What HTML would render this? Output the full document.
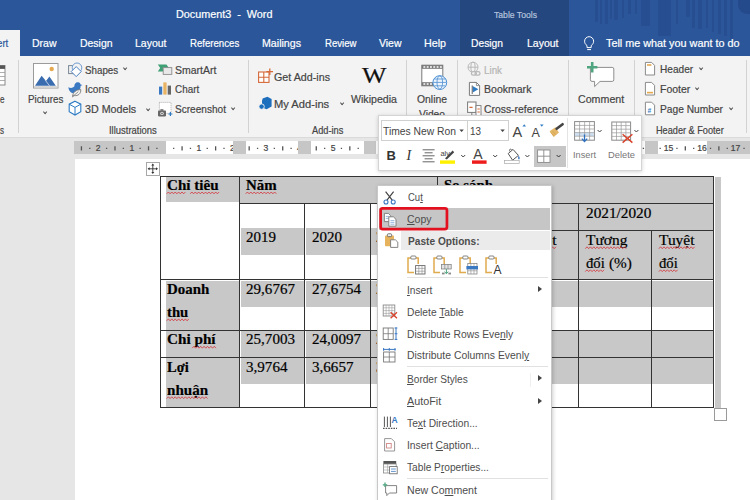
<!DOCTYPE html>
<html lang="vi"><head><meta charset="utf-8"><title>Document3 - Word</title>
<style>
html,body{margin:0;padding:0}
body{width:750px;height:500px;position:relative;overflow:hidden;background:#e6e6e6;font-family:"Liberation Sans",sans-serif}
.a{position:absolute}
.t{position:absolute;white-space:pre;transform-origin:0 0;-webkit-text-stroke:0.2px currentColor}
.t u{text-decoration:underline;text-underline-offset:1px;text-decoration-thickness:1px}
.ns{-webkit-text-stroke:0 !important}
.hl{position:absolute;background:#c8c8c8}
.vl{position:absolute;width:1px;background:#333}
.hz{position:absolute;height:1px;background:#333}
.sep{position:absolute;width:1px;background:#d2d2d2;top:60px;height:73px}
.chev{position:absolute;width:2.4px;height:2.4px;border-right:1px solid #555;border-bottom:1px solid #555;transform:translate(.4px,.6px) rotate(45deg)}
.msep{position:absolute;height:1px;background:#e1e1e1;left:407px;width:141px}
.arr{position:absolute;width:0;height:0;border-left:4px solid #444;border-top:3.5px solid transparent;border-bottom:3.5px solid transparent}
svg{position:absolute;overflow:visible}
</style></head><body>
<!-- title + tabs -->
<div class="a" id="blue" style="left:0;top:0;width:750px;height:56px;background:#2b579a"></div>
<div class="a" style="left:460px;top:0;width:109px;height:56px;background:#24477f"></div>
<div class="a" style="left:595.0px;top:0;width:3.0px;height:21.6px;background:rgba(22,48,110,.22)"></div>
<div class="a" style="left:600.0px;top:0;width:2.4px;height:24.0px;background:rgba(22,48,110,.22)"></div>
<div class="a" style="left:604.8px;top:0;width:3.6px;height:24.0px;background:rgba(22,48,110,.22)"></div>
<div class="a" style="left:609.6px;top:0;width:2.4px;height:19.0px;background:rgba(22,48,110,.22)"></div>
<div class="a" style="left:614.0px;top:0;width:4.0px;height:20.0px;background:rgba(22,48,110,.22)"></div>
<div class="a" style="left:621.6px;top:0;width:2.4px;height:18.0px;background:rgba(22,48,110,.22)"></div>
<div class="a" style="left:627.5px;top:0;width:3.5px;height:14.4px;background:rgba(22,48,110,.22)"></div>
<div class="a" style="left:634.7px;top:0;width:2.3px;height:14.0px;background:rgba(22,48,110,.22)"></div>
<div class="a" style="left:641.0px;top:0;width:9.3px;height:26.0px;background:rgba(22,48,110,.22)"></div>
<div class="a" style="left:657.5px;top:0;width:13.2px;height:36.0px;background:rgba(22,48,110,.22)"></div>
<div class="a" style="left:675.5px;top:0;width:2.5px;height:24.0px;background:rgba(22,48,110,.22)"></div>
<div class="a" style="left:686.0px;top:0;width:4.0px;height:17.0px;background:rgba(22,48,110,.22)"></div>
<div class="a" style="left:692.0px;top:0;width:2.7px;height:28.0px;background:rgba(22,48,110,.22)"></div>
<div class="a" style="left:698.0px;top:0;width:4.0px;height:28.8px;background:rgba(22,48,110,.22)"></div>
<div class="a" style="left:705.5px;top:0;width:2.5px;height:28.0px;background:rgba(22,48,110,.22)"></div>
<div class="a" style="left:711.5px;top:0;width:2.5px;height:32.0px;background:rgba(22,48,110,.22)"></div>
<div class="a" style="left:717.5px;top:0;width:3.5px;height:33.6px;background:rgba(22,48,110,.22)"></div>
<div class="a" style="left:723.5px;top:0;width:3.5px;height:36.0px;background:rgba(22,48,110,.22)"></div>
<div class="a" style="left:729.5px;top:0;width:3.5px;height:40.0px;background:rgba(22,48,110,.22)"></div>
<div class="a" style="left:738px;top:0;width:12px;height:14px;border-radius:0 0 0 9px;background:rgba(22,48,110,.3)"></div>
<div class="a" style="left:0;top:30px;width:20px;height:26px;background:#f3f3f3"></div>
<!-- ribbon -->
<div class="a" style="left:0;top:56px;width:750px;height:81px;background:#f3f3f3"></div>
<div class="a" style="left:0;top:137px;width:750px;height:1px;background:#dadada"></div>
<div class="sep" style="left:18px"></div><div class="sep" style="left:248px"></div><div class="sep" style="left:406px"></div><div class="sep" style="left:457px"></div><div class="sep" style="left:568px"></div><div class="sep" style="left:634px"></div><div class="sep" style="left:746px"></div>
<svg style="left:0;top:0" width="750" height="160" viewBox="0 0 750 160" fill="none">
<!-- lightbulb -->
<g stroke="#fff" stroke-width="1" fill="none"><path d="M587 45.6C585.2 44.2 584.6 42.8 584.6 41.2A4.5 4.5 0 0 1 593.6 41.2C593.6 42.8 593 44.2 591.2 45.6V47.6H587Z"/><path d="M587.2 49.6H591"/></g>
<!-- table fragment -->
<rect x="-8" y="65.5" width="13" height="19.5" fill="#fff" stroke="#8a8a8a" stroke-width="1"/>
<rect x="-8" y="65.5" width="13" height="3.4" fill="#555"/>
<path d="M-8 72.5H5M-8 76.5H5M-8 80.5H5" stroke="#9a9a9a" stroke-width="0.8"/>
<!-- pictures -->
<rect x="33.5" y="63.5" width="24.5" height="24.5" fill="#fff" stroke="#9b9b9b" stroke-width="1"/>
<rect x="34" y="86" width="23.5" height="1.6" fill="#d6d6d6"/>
<path d="M35 85.8L41.6 75.8L46 81L49.4 76.6L55.8 85.8Z" fill="#3a6db0"/>
<path d="M45.4 80.4L49.6 85.8" stroke="#f0f4fa" stroke-width="0.7"/>
<circle cx="51.7" cy="69" r="2.2" fill="#e5a94f"/>
<!-- shapes -->
<rect x="68.6" y="65.6" width="8" height="8" stroke="#7b8796" stroke-width="1" fill="#f3f3f3"/>
<circle cx="77" cy="67.8" r="4.8" stroke="#6f9bd1" stroke-width="1" fill="#f3f3f3"/>
<path d="M76.2 66.6L81.2 71.6L76.2 76.6L71.2 71.6Z" stroke="#4b7fc0" stroke-width="1" fill="#fff"/>
<!-- icons (bird + leaf) -->
<path d="M68.3 87.2C70.5 88.4 72.6 88.2 74.3 86.6C74.3 83.6 76 81.8 78.2 82.2C79.6 82.4 80.4 83.4 80.6 84.4L82.4 85L80.6 85.9C80.6 90.8 77 93.6 72.8 93.2C70.4 92.8 68.8 90.4 68.3 87.2Z" fill="#3b78c2"/>
<path d="M72.6 96.2C73 92.4 76 89.6 80.8 89.6C81 93.8 78 96 74.4 95.6Z" fill="#f3f3f3" stroke="#777" stroke-width="0.9"/>
<path d="M72 97.2L78.4 91.6" stroke="#777" stroke-width="0.8"/>
<!-- 3D models -->
<path d="M75 101.2L80.8 104.2V111.6L75 115L69.2 111.6V104.2Z" stroke="#2e7bc4" stroke-width="1.1" fill="#fff"/>
<path d="M69.2 104.2L75 107.4L80.8 104.2M75 107.4V115" stroke="#2e7bc4" stroke-width="1"/>
<!-- smartart -->
<path d="M157.8 64.4H166.4L169 68H163.2V71.6H157.8L160.2 68Z" fill="#3f9f75"/>
<rect x="163.2" y="67.6" width="8.6" height="6.8" fill="#e8e8e8" stroke="#8c8c8c" stroke-width="0.9"/>
<!-- chart -->
<rect x="159" y="86.6" width="3.2" height="8" fill="#3b78c2"/>
<rect x="163.3" y="82.4" width="3.3" height="12.2" fill="#e8b463"/>
<rect x="167.7" y="85.6" width="3.3" height="9" fill="#666"/>
<!-- screenshot -->
<rect x="159.4" y="102.4" width="11.6" height="11" stroke="#9a9a9a" stroke-width="0.8" stroke-dasharray="1 1" fill="#fff"/>
<rect x="158" y="110.4" width="8" height="6" rx="0.8" fill="#666"/><rect x="160.4" y="109.2" width="3" height="1.6" fill="#666"/><circle cx="162" cy="113.4" r="1.7" fill="#f3f3f3"/><circle cx="162" cy="113.4" r="0.9" fill="#666"/>
<path d="M170.4 112V116M168.4 114H172.4" stroke="#2e7bc4" stroke-width="1.2"/>
<!-- get add-ins -->
<g stroke="#d56a3b" stroke-width="1.1" fill="#fff"><rect x="258.6" y="72" width="10.4" height="10.4"/><path d="M263.8 72V82.4M258.6 77.2H269" fill="none"/><path d="M269.8 68.4V75M266.4 71.7H273" fill="none" stroke-width="1.3"/></g>
<!-- my add-ins -->
<path d="M262.6 98.6L267.4 96.8L271.6 99V106.4L266.6 109.2L262 107.4V101Z" fill="#1d6fbd"/>
<circle cx="261.6" cy="106.6" r="2.7" fill="#1d6fbd" stroke="#f3f3f3" stroke-width="0.9"/>
<!-- online video -->
<rect x="421.8" y="65.2" width="21" height="20.6" fill="#fff" stroke="#7a7a7a" stroke-width="1"/>
<rect x="421.8" y="65.2" width="21" height="3.6" fill="#777"/><rect x="421.8" y="82.2" width="21" height="3.6" fill="#777"/>
<path d="M423.4 67H442" stroke="#fff" stroke-width="1.7" stroke-dasharray="1.9 1.4"/>
<path d="M423.4 84H434" stroke="#fff" stroke-width="1.7" stroke-dasharray="1.9 1.4"/>
<circle cx="439.8" cy="82.6" r="6.9" fill="#eef4fb" stroke="#4b8fd3" stroke-width="1"/>
<ellipse cx="439.8" cy="82.4" rx="2.8" ry="6.6" stroke="#4b8fd3" stroke-width="0.8"/>
<path d="M433.2 82.4H446.4M434.2 79H445.4M434.2 85.8H445.4" stroke="#4b8fd3" stroke-width="0.8"/>
<!-- link (disabled) -->
<g stroke="#b9b9b9" stroke-width="1" fill="none"><circle cx="473" cy="67.2" r="5"/><ellipse cx="473" cy="67.2" rx="2.1" ry="5"/><path d="M468 67.2H478"/><rect x="471.4" y="71.6" width="5" height="3.6" rx="1.8" fill="#f3f3f3" stroke-width="1.3"/><rect x="475" y="71.6" width="5" height="3.6" rx="1.8" stroke-width="1.3"/></g>
<!-- bookmark -->
<path d="M469.4 82.4H476.4L479.6 85.6V95.4H469.4Z" fill="#fff" stroke="#7a7a7a" stroke-width="1"/>
<path d="M476.4 82.4V85.6H479.6" stroke="#7a7a7a" stroke-width="0.8"/>
<path d="M472.6 86V92.6L478.4 89.3Z" fill="#2e7bc4"/>
<path d="M472.2 85.4V94" stroke="#555" stroke-width="0.9"/>
<!-- cross-reference -->
<rect x="467.6" y="102" width="8.4" height="10.4" fill="#fff" stroke="#7a7a7a" stroke-width="1"/>
<path d="M469.4 107.4H472.6" stroke="#d56a3b" stroke-width="1.3"/>
<rect x="476" y="105.6" width="5" height="10" fill="#fff" stroke="#7a7a7a" stroke-width="0.9"/>
<path d="M477.4 109H479.8M477.4 112H479.8" stroke="#d56a3b" stroke-width="1.1"/>
<path d="M471.8 112.4V115.4H476" stroke="#7a7a7a" stroke-width="0.9"/>
<!-- comment -->
<path d="M590.4 67.4H612.2Q613.8 67.4 613.8 69V79.8Q613.8 81.4 612.2 81.4H600L594.6 86.6V81.4H592Q590.4 81.4 590.4 79.8Z" fill="#fff" stroke="#8d8d8d" stroke-width="1"/>
<path d="M592.2 62V72.4M587 67.2H597.4" stroke="#4ea57f" stroke-width="2.6"/>
<!-- header/footer/page number -->
<g fill="#fff" stroke="#8a8a8a" stroke-width="1"><path d="M645.4 62.4H651.6L654.6 65.4V75H645.4Z"/><path d="M645.4 82.4H651.6L654.6 85.4V95H645.4Z"/><path d="M645.4 102.2H651.6L654.6 105.2V114.8H645.4Z"/></g>
<path d="M647 65H651.4" stroke="#e5a94f" stroke-width="1.6"/>
<path d="M647 92.6H653" stroke="#e5a94f" stroke-width="1.6"/>
<text x="647.6" y="112.6" font-family="Liberation Sans, sans-serif" font-size="6.5" font-weight="bold" fill="#2e7bc4" font-style="italic">#</text>
</svg>
<div class="chev" style="left:43px;top:109.5px"></div>
<div class="chev" style="left:122.5px;top:66px"></div>
<div class="chev" style="left:145.5px;top:106.5px"></div>
<div class="chev" style="left:230.8px;top:105.6px"></div>
<div class="chev" style="left:339.8px;top:101px"></div>
<div class="chev" style="left:698.5px;top:65.6px"></div>
<div class="chev" style="left:695.2px;top:85.6px"></div>
<div class="chev" style="left:728.8px;top:105.6px"></div>

<span class="t" style="left:175.6px;top:9.4px;font:normal 11.00px/1 'Liberation Sans', sans-serif;color:#fff;transform:scaleX(0.9813)">Document3  -  Word</span>
<span class="t" style="left:493.5px;top:9.8px;font:normal 9.50px/1 'Liberation Sans', sans-serif;color:#b4c3de;transform:scaleX(0.9080)">Table Tools</span>
<span class="t" style="left:-2.8px;top:38.2px;font:normal 11.00px/1 'Liberation Sans', sans-serif;color:#2b579a;transform:scaleX(0.8798)">ert</span>
<span class="t" style="left:32.0px;top:38.2px;font:normal 11.00px/1 'Liberation Sans', sans-serif;color:#fff;transform:scaleX(0.9544)">Draw</span>
<span class="t" style="left:80.0px;top:38.2px;font:normal 11.00px/1 'Liberation Sans', sans-serif;color:#fff;transform:scaleX(0.9489)">Design</span>
<span class="t" style="left:135.0px;top:38.2px;font:normal 11.00px/1 'Liberation Sans', sans-serif;color:#fff;transform:scaleX(0.9536)">Layout</span>
<span class="t" style="left:189.6px;top:38.2px;font:normal 11.00px/1 'Liberation Sans', sans-serif;color:#fff;transform:scaleX(0.8744)">References</span>
<span class="t" style="left:262.0px;top:38.2px;font:normal 11.00px/1 'Liberation Sans', sans-serif;color:#fff;transform:scaleX(0.9663)">Mailings</span>
<span class="t" style="left:325.0px;top:38.2px;font:normal 11.00px/1 'Liberation Sans', sans-serif;color:#fff;transform:scaleX(0.8731)">Review</span>
<span class="t" style="left:379.0px;top:38.2px;font:normal 11.00px/1 'Liberation Sans', sans-serif;color:#fff;transform:scaleX(0.9511)">View</span>
<span class="t" style="left:424.0px;top:38.2px;font:normal 11.00px/1 'Liberation Sans', sans-serif;color:#fff;transform:scaleX(0.9724)">Help</span>
<span class="t" style="left:471.0px;top:38.2px;font:normal 11.00px/1 'Liberation Sans', sans-serif;color:#fff;transform:scaleX(0.9343)">Design</span>
<span class="t" style="left:527.0px;top:38.2px;font:normal 11.00px/1 'Liberation Sans', sans-serif;color:#fff;transform:scaleX(0.9536)">Layout</span>
<span class="t" style="left:606.0px;top:38.2px;font:normal 11.00px/1 'Liberation Sans', sans-serif;color:#fff;transform:scaleX(0.9834)">Tell me what you want to do</span>
<span class="t" style="left:0.0px;top:93.6px;font:normal 11.40px/1 'Liberation Sans', sans-serif;color:#444;transform:scaleX(0.7094)">e</span>
<span class="t" style="left:0.0px;top:124.6px;font:normal 11.40px/1 'Liberation Sans', sans-serif;color:#444;transform:scaleX(0.7014)">s</span>
<span class="t" style="left:27.6px;top:93.8px;font:normal 11.40px/1 'Liberation Sans', sans-serif;color:#444;transform:scaleX(0.8601)">Pictures</span>
<span class="t" style="left:84.8px;top:64.6px;font:normal 11.40px/1 'Liberation Sans', sans-serif;color:#444;transform:scaleX(0.8592)">Shapes</span>
<span class="t" style="left:84.8px;top:84.2px;font:normal 11.40px/1 'Liberation Sans', sans-serif;color:#444;transform:scaleX(0.8886)">Icons</span>
<span class="t" style="left:84.8px;top:104.2px;font:normal 11.40px/1 'Liberation Sans', sans-serif;color:#444;transform:scaleX(0.9403)">3D Models</span>
<span class="t" style="left:109.0px;top:125.4px;font:normal 10.50px/1 'Liberation Sans', sans-serif;color:#444;transform:scaleX(0.8981)">Illustrations</span>
<span class="t" style="left:175.0px;top:64.6px;font:normal 11.40px/1 'Liberation Sans', sans-serif;color:#444;transform:scaleX(0.9213)">SmartArt</span>
<span class="t" style="left:175.0px;top:84.2px;font:normal 11.40px/1 'Liberation Sans', sans-serif;color:#444;transform:scaleX(0.8686)">Chart</span>
<span class="t" style="left:175.0px;top:104.2px;font:normal 11.40px/1 'Liberation Sans', sans-serif;color:#444;transform:scaleX(0.8850)">Screenshot</span>
<span class="t" style="left:274.4px;top:71.6px;font:normal 11.40px/1 'Liberation Sans', sans-serif;color:#444;transform:scaleX(0.9407)">Get Add-ins</span>
<span class="t" style="left:274.4px;top:98.6px;font:normal 11.40px/1 'Liberation Sans', sans-serif;color:#444;transform:scaleX(0.9797)">My Add-ins</span>
<span class="t" style="left:351.0px;top:93.6px;font:normal 11.40px/1 'Liberation Sans', sans-serif;color:#444;transform:scaleX(0.9314)">Wikipedia</span>
<span class="t" style="left:311.6px;top:125.4px;font:normal 10.50px/1 'Liberation Sans', sans-serif;color:#444;transform:scaleX(0.8818)">Add-ins</span>
<span class="t" style="left:417.0px;top:93.6px;font:normal 11.40px/1 'Liberation Sans', sans-serif;color:#444;transform:scaleX(0.9108)">Online</span>
<span class="t" style="left:419.0px;top:108.6px;font:normal 11.40px/1 'Liberation Sans', sans-serif;color:#444;transform:scaleX(0.8985)">Video</span>
<span class="t" style="left:483.6px;top:64.9px;font:normal 10.50px/1 'Liberation Sans', sans-serif;color:#b5b5b5;transform:scaleX(0.9343)">Link</span>
<span class="t" style="left:483.6px;top:84.2px;font:normal 11.40px/1 'Liberation Sans', sans-serif;color:#444;transform:scaleX(0.9243)">Bookmark</span>
<span class="t" style="left:483.6px;top:104.2px;font:normal 11.40px/1 'Liberation Sans', sans-serif;color:#444;transform:scaleX(0.9110)">Cross-reference</span>
<span class="t" style="left:577.8px;top:93.6px;font:normal 11.40px/1 'Liberation Sans', sans-serif;color:#444;transform:scaleX(0.9357)">Comment</span>
<span class="t" style="left:660.4px;top:64.4px;font:normal 11.40px/1 'Liberation Sans', sans-serif;color:#444;transform:scaleX(0.8860)">Header</span>
<span class="t" style="left:660.4px;top:84.0px;font:normal 11.40px/1 'Liberation Sans', sans-serif;color:#444;transform:scaleX(0.9204)">Footer</span>
<span class="t" style="left:660.4px;top:104.0px;font:normal 11.40px/1 'Liberation Sans', sans-serif;color:#444;transform:scaleX(0.8964)">Page Number</span>
<span class="t" style="left:655.7px;top:125.4px;font:normal 10.50px/1 'Liberation Sans', sans-serif;color:#444;transform:scaleX(0.8721)">Header &amp; Footer</span>
<span class="t" style="left:362.0px;top:64.0px;font:normal 23.00px/1 'Liberation Serif', serif;color:#111;transform:scaleX(1.1235)">W</span>
<!-- ruler -->
<div class="a" style="left:74px;top:141px;width:676px;height:13px;background:#fff"></div>
<div class="a" style="left:74px;top:141px;width:91.5px;height:13px;background:#c6c6c6"></div>
<div class="a" style="left:707px;top:141px;width:43px;height:13px;background:#c6c6c6"></div>
<span class="t" style="left:88.2px;top:143px;width:20px;text-align:center;font:8.6px/10px 'Liberation Sans',sans-serif;color:#444">2</span>
<span class="t" style="left:121.8px;top:143px;width:20px;text-align:center;font:8.6px/10px 'Liberation Sans',sans-serif;color:#444">1</span>
<span class="t" style="left:188.9px;top:143px;width:20px;text-align:center;font:8.6px/10px 'Liberation Sans',sans-serif;color:#444">1</span>
<span class="t" style="left:222.4px;top:143px;width:20px;text-align:center;font:8.6px/10px 'Liberation Sans',sans-serif;color:#444">2</span>
<span class="t" style="left:255.9px;top:143px;width:20px;text-align:center;font:8.6px/10px 'Liberation Sans',sans-serif;color:#444">3</span>
<span class="t" style="left:289.5px;top:143px;width:20px;text-align:center;font:8.6px/10px 'Liberation Sans',sans-serif;color:#444">4</span>
<span class="t" style="left:323.1px;top:143px;width:20px;text-align:center;font:8.6px/10px 'Liberation Sans',sans-serif;color:#444">5</span>
<span class="t" style="left:356.6px;top:143px;width:20px;text-align:center;font:8.6px/10px 'Liberation Sans',sans-serif;color:#444">6</span>
<span class="t" style="left:390.1px;top:143px;width:20px;text-align:center;font:8.6px/10px 'Liberation Sans',sans-serif;color:#444">7</span>
<span class="t" style="left:423.7px;top:143px;width:20px;text-align:center;font:8.6px/10px 'Liberation Sans',sans-serif;color:#444">8</span>
<span class="t" style="left:457.2px;top:143px;width:20px;text-align:center;font:8.6px/10px 'Liberation Sans',sans-serif;color:#444">9</span>
<span class="t" style="left:490.8px;top:143px;width:20px;text-align:center;font:8.6px/10px 'Liberation Sans',sans-serif;color:#444">10</span>
<span class="t" style="left:524.3px;top:143px;width:20px;text-align:center;font:8.6px/10px 'Liberation Sans',sans-serif;color:#444">11</span>
<span class="t" style="left:557.9px;top:143px;width:20px;text-align:center;font:8.6px/10px 'Liberation Sans',sans-serif;color:#444">12</span>
<span class="t" style="left:591.5px;top:143px;width:20px;text-align:center;font:8.6px/10px 'Liberation Sans',sans-serif;color:#444">13</span>
<span class="t" style="left:625.0px;top:143px;width:20px;text-align:center;font:8.6px/10px 'Liberation Sans',sans-serif;color:#444">14</span>
<span class="t" style="left:658.5px;top:143px;width:20px;text-align:center;font:8.6px/10px 'Liberation Sans',sans-serif;color:#444">15</span>
<span class="t" style="left:692.1px;top:143px;width:20px;text-align:center;font:8.6px/10px 'Liberation Sans',sans-serif;color:#444">16</span>
<span class="t" style="left:725.6px;top:143px;width:20px;text-align:center;font:8.6px/10px 'Liberation Sans',sans-serif;color:#444">17</span>
<svg style="left:0;top:0" width="750" height="160" viewBox="0 0 750 160"><path d="M81.43 146.15V150.45M89.81 147.65V148.95M106.59 147.65V148.95M114.98 146.15V150.45M123.36 147.65V148.95M140.14 147.65V148.95M148.53 146.15V150.45M156.91 147.65V148.95M173.69 147.65V148.95M182.08 146.15V150.45M190.46 147.65V148.95M207.24 147.65V148.95M215.63 146.15V150.45M224.01 147.65V148.95M240.79 147.65V148.95M249.18 146.15V150.45M257.56 147.65V148.95M274.34 147.65V148.95M282.72 146.15V150.45M291.11 147.65V148.95M307.89 147.65V148.95M316.27 146.15V150.45M324.66 147.65V148.95M341.44 147.65V148.95M349.82 146.15V150.45M358.21 147.65V148.95M374.99 147.65V148.95M383.38 146.15V150.45M391.76 147.65V148.95M408.54 147.65V148.95M416.92 146.15V150.45M425.31 147.65V148.95M442.09 147.65V148.95M450.47 146.15V150.45M458.86 147.65V148.95M475.64 147.65V148.95M484.02 146.15V150.45M492.41 147.65V148.95M509.19 147.65V148.95M517.58 146.15V150.45M525.96 147.65V148.95M542.74 147.65V148.95M551.12 146.15V150.45M559.51 147.65V148.95M576.29 147.65V148.95M584.67 146.15V150.45M593.06 147.65V148.95M609.84 147.65V148.95M618.23 146.15V150.45M626.61 147.65V148.95M643.39 147.65V148.95M651.77 146.15V150.45M660.16 147.65V148.95M676.94 147.65V148.95M685.32 146.15V150.45M693.71 147.65V148.95M710.49 147.65V148.95M718.87 146.15V150.45M727.26 147.65V148.95M744.04 147.65V148.95" stroke="#555" stroke-width="1.3" fill="none"/></svg>
<div class="a" style="left:233.0px;top:141px;width:12.5px;height:13px;background:#c6c6c6"></div>
<div class="a" style="left:298.3px;top:141px;width:12.5px;height:13px;background:#c6c6c6"></div>
<div class="a" style="left:363.6px;top:141px;width:12.5px;height:13px;background:#c6c6c6"></div>
<div class="a" style="left:430.6px;top:141px;width:12.5px;height:13px;background:#c6c6c6"></div>
<div class="a" style="left:498.6px;top:141px;width:12.5px;height:13px;background:#c6c6c6"></div>
<div class="a" style="left:572.2px;top:141px;width:12.5px;height:13px;background:#c6c6c6"></div>
<div class="a" style="left:645.3px;top:141px;width:12.5px;height:13px;background:#c6c6c6"></div>
<!-- page -->
<div class="a" style="left:74.5px;top:158.6px;width:676px;height:342px;background:#fff"></div>
<div class="hl" style="left:166.4px;top:177.0px;width:73.0px;height:25.4px"></div>
<div class="hl" style="left:166.4px;top:280.5px;width:73.0px;height:49.5px"></div>
<div class="hl" style="left:166.4px;top:331.0px;width:73.0px;height:26.0px"></div>
<div class="hl" style="left:166.4px;top:358.0px;width:73.0px;height:49.5px"></div>
<div class="hl" style="left:240.4px;top:177.0px;width:196.6px;height:25.6px"></div>
<div class="hl" style="left:438.0px;top:177.0px;width:275.6px;height:26.0px"></div>
<div class="hl" style="left:240.6px;top:228.4px;width:63.8px;height:26.6px"></div>
<div class="hl" style="left:240.6px;top:280.5px;width:63.8px;height:26.0px"></div>
<div class="hl" style="left:240.6px;top:331.0px;width:63.8px;height:26.0px"></div>
<div class="hl" style="left:240.6px;top:358.0px;width:63.8px;height:26.0px"></div>
<div class="hl" style="left:305.9px;top:228.4px;width:63.8px;height:26.6px"></div>
<div class="hl" style="left:305.9px;top:280.5px;width:63.8px;height:26.0px"></div>
<div class="hl" style="left:305.9px;top:331.0px;width:63.8px;height:26.0px"></div>
<div class="hl" style="left:305.9px;top:358.0px;width:63.8px;height:26.0px"></div>
<div class="hl" style="left:371.2px;top:228.4px;width:65.5px;height:26.6px"></div>
<div class="hl" style="left:371.2px;top:280.5px;width:65.5px;height:26.0px"></div>
<div class="hl" style="left:371.2px;top:331.0px;width:65.5px;height:26.0px"></div>
<div class="hl" style="left:371.2px;top:358.0px;width:65.5px;height:26.0px"></div>
<div class="hl" style="left:438.0px;top:204.0px;width:275.6px;height:75.5px"></div>
<div class="hl" style="left:438.0px;top:280.5px;width:275.6px;height:26.1px"></div>
<div class="hl" style="left:438.0px;top:331.0px;width:275.6px;height:26.0px"></div>
<div class="hl" style="left:438.0px;top:358.0px;width:275.6px;height:26.0px"></div>
<div class="hl" style="left:714.6px;top:177.0px;width:6.2px;height:230.5px"></div>
<span class="t" style="left:167.0px;top:177.7px;font:bold 14.70px/1 'Liberation Serif', serif;color:#000;transform:scaleX(1.0281)">Chỉ tiêu</span>
<span class="t" style="left:246.0px;top:177.7px;font:bold 14.70px/1 'Liberation Serif', serif;color:#000;transform:scaleX(1.0137)">Năm</span>
<span class="t" style="left:444.0px;top:177.7px;font:bold 14.70px/1 'Liberation Serif', serif;color:#000;transform:scaleX(1.0084)">So sánh</span>
<span class="t" style="left:246.0px;top:230.1px;font:normal 14.70px/1 'Liberation Serif', serif;color:#000;transform:scaleX(1.0213)">2019</span>
<span class="t" style="left:311.5px;top:230.1px;font:normal 14.70px/1 'Liberation Serif', serif;color:#000;transform:scaleX(1.0213)">2020</span>
<span class="t" style="left:375.5px;top:230.1px;font:normal 14.70px/1 'Liberation Serif', serif;color:#000;transform:scaleX(1.0213)">2021</span>
<span class="t" style="left:585.6px;top:205.7px;font:normal 14.70px/1 'Liberation Serif', serif;color:#000;transform:scaleX(1.0407)">2021/2020</span>
<span class="t" style="left:444.0px;top:205.7px;font:normal 14.70px/1 'Liberation Serif', serif;color:#000;transform:scaleX(1.0343)">2020/2019</span>
<span class="t" style="left:585.6px;top:232.5px;font:normal 14.70px/1 'Liberation Serif', serif;color:#000;transform:scaleX(1.0510)">Tương</span>
<span class="t" style="left:585.6px;top:255.5px;font:normal 14.70px/1 'Liberation Serif', serif;color:#000;transform:scaleX(1.0010)">đối</span>
<span class="t" style="left:609.0px;top:255.5px;font:normal 14.70px/1 'Liberation Serif', serif;color:#000;transform:scaleX(1.0394)">(%)</span>
<span class="t" style="left:659.2px;top:232.5px;font:normal 14.70px/1 'Liberation Serif', serif;color:#000;transform:scaleX(1.0519)">Tuyệt</span>
<span class="t" style="left:659.2px;top:255.5px;font:normal 14.70px/1 'Liberation Serif', serif;color:#000;transform:scaleX(1.0010)">đối</span>
<span class="t" style="left:444.0px;top:232.5px;font:normal 14.70px/1 'Liberation Serif', serif;color:#000;transform:scaleX(1.0409)">Tương</span>
<span class="t" style="left:444.0px;top:255.5px;font:normal 14.70px/1 'Liberation Serif', serif;color:#000;transform:scaleX(1.0010)">đối</span>
<span class="t" style="left:467.4px;top:255.5px;font:normal 14.70px/1 'Liberation Serif', serif;color:#000;transform:scaleX(1.0394)">(%)</span>
<span class="t" style="left:520.5px;top:232.5px;font:normal 14.70px/1 'Liberation Serif', serif;color:#000;transform:scaleX(1.0519)">Tuyệt</span>
<span class="t" style="left:520.5px;top:255.5px;font:normal 14.70px/1 'Liberation Serif', serif;color:#000;transform:scaleX(1.0010)">đối</span>
<span class="t" style="left:167.0px;top:282.4px;font:bold 14.70px/1 'Liberation Serif', serif;color:#000;transform:scaleX(1.0158)">Doanh</span>
<span class="t" style="left:167.0px;top:304.7px;font:bold 14.70px/1 'Liberation Serif', serif;color:#000;transform:scaleX(1.0031)">thu</span>
<span class="t" style="left:166.8px;top:332.1px;font:bold 14.70px/1 'Liberation Serif', serif;color:#000;transform:scaleX(1.0351)">Chi phí</span>
<span class="t" style="left:167.0px;top:359.7px;font:bold 14.70px/1 'Liberation Serif', serif;color:#000;transform:scaleX(0.9902)">Lợi</span>
<span class="t" style="left:167.0px;top:382.5px;font:bold 14.70px/1 'Liberation Serif', serif;color:#000;transform:scaleX(1.0292)">nhuận</span>
<span class="t" style="left:246.0px;top:282.4px;font:normal 14.70px/1 'Liberation Serif', serif;color:#000;transform:scaleX(1.0265)">29,6767</span>
<span class="t" style="left:311.5px;top:282.4px;font:normal 14.70px/1 'Liberation Serif', serif;color:#000;transform:scaleX(1.0265)">27,6754</span>
<span class="t" style="left:375.5px;top:282.4px;font:normal 14.70px/1 'Liberation Serif', serif;color:#000;transform:scaleX(1.0381)">28,1123</span>
<span class="t" style="left:246.0px;top:332.1px;font:normal 14.70px/1 'Liberation Serif', serif;color:#000;transform:scaleX(1.0265)">25,7003</span>
<span class="t" style="left:311.5px;top:332.1px;font:normal 14.70px/1 'Liberation Serif', serif;color:#000;transform:scaleX(1.0265)">24,0097</span>
<span class="t" style="left:375.5px;top:332.1px;font:normal 14.70px/1 'Liberation Serif', serif;color:#000;transform:scaleX(1.0265)">24,5560</span>
<span class="t" style="left:246.0px;top:359.7px;font:normal 14.70px/1 'Liberation Serif', serif;color:#000;transform:scaleX(1.0275)">3,9764</span>
<span class="t" style="left:311.5px;top:359.7px;font:normal 14.70px/1 'Liberation Serif', serif;color:#000;transform:scaleX(1.0275)">3,6657</span>
<span class="t" style="left:375.5px;top:359.7px;font:normal 14.70px/1 'Liberation Serif', serif;color:#000;transform:scaleX(1.0275)">3,5563</span>
<svg style="left:0;top:0" width="750" height="500" viewBox="0 0 750 500" fill="none">
<path d="M166.7 193.8L168.4 192.0L170.1 193.8L171.8 192.0L173.5 193.8L175.2 192.0L176.9 193.8L178.6 192.0L180.3 193.8L182.0 192.0L183.7 193.8L185.4 192.0" stroke="#d6262c" stroke-width="0.75" stroke-linejoin="round"/>
<path d="M190.2 193.8L191.9 192.0L193.6 193.8L195.3 192.0L197.0 193.8L198.7 192.0L200.4 193.8L202.1 192.0L203.8 193.8L205.5 192.0L207.2 193.8L208.9 192.0L210.6 193.8L212.3 192.0L214.0 193.8L215.7 192.0L217.4 193.8L219.1 192.0" stroke="#d6262c" stroke-width="0.75" stroke-linejoin="round"/>
<path d="M245.7 193.8L247.4 192.0L249.1 193.8L250.8 192.0L252.5 193.8L254.2 192.0L255.9 193.8L257.6 192.0L259.3 193.8L261.0 192.0L262.7 193.8L264.4 192.0L266.1 193.8L267.8 192.0L269.5 193.8L271.2 192.0L272.9 193.8L274.6 192.0L276.3 193.8" stroke="#d6262c" stroke-width="0.75" stroke-linejoin="round"/>
<path d="M585.3 248.7L587.0 246.8L588.7 248.7L590.4 246.8L592.1 248.7L593.8 246.8L595.5 248.7L597.2 246.8L598.9 248.7L600.6 246.8L602.3 248.7L604.0 246.8L605.7 248.7L607.4 246.8L609.1 248.7L610.8 246.8L612.5 248.7L614.2 246.8L615.9 248.7L617.6 246.8L619.3 248.7L621.0 246.8L622.7 248.7L624.4 246.8L626.1 248.7" stroke="#d6262c" stroke-width="0.75" stroke-linejoin="round"/>
<path d="M585.3 271.6L587.0 269.8L588.7 271.6L590.4 269.8L592.1 271.6L593.8 269.8L595.5 271.6L597.2 269.8L598.9 271.6L600.6 269.8L602.3 271.6L604.0 269.8" stroke="#d6262c" stroke-width="0.75" stroke-linejoin="round"/>
<path d="M658.9 248.7L660.6 246.8L662.3 248.7L664.0 246.8L665.7 248.7L667.4 246.8L669.1 248.7L670.8 246.8L672.5 248.7L674.2 246.8L675.9 248.7L677.6 246.8L679.3 248.7L681.0 246.8L682.7 248.7L684.4 246.8L686.1 248.7L687.8 246.8L689.5 248.7L691.2 246.8L692.9 248.7L694.6 246.8" stroke="#d6262c" stroke-width="0.75" stroke-linejoin="round"/>
<path d="M658.9 271.6L660.6 269.8L662.3 271.6L664.0 269.8L665.7 271.6L667.4 269.8L669.1 271.6L670.8 269.8L672.5 271.6L674.2 269.8L675.9 271.6L677.6 269.8" stroke="#d6262c" stroke-width="0.75" stroke-linejoin="round"/>
<path d="M443.7 248.7L445.4 246.8L447.1 248.7L448.8 246.8L450.5 248.7L452.2 246.8L453.9 248.7L455.6 246.8L457.3 248.7L459.0 246.8L460.7 248.7L462.4 246.8L464.1 248.7L465.8 246.8L467.5 248.7L469.2 246.8L470.9 248.7L472.6 246.8L474.3 248.7L476.0 246.8L477.7 248.7L479.4 246.8L481.1 248.7L482.8 246.8L484.5 248.7" stroke="#d6262c" stroke-width="0.75" stroke-linejoin="round"/>
<path d="M443.7 271.6L445.4 269.8L447.1 271.6L448.8 269.8L450.5 271.6L452.2 269.8L453.9 271.6L455.6 269.8L457.3 271.6L459.0 269.8L460.7 271.6L462.4 269.8" stroke="#d6262c" stroke-width="0.75" stroke-linejoin="round"/>
<path d="M520.2 248.7L521.9 246.8L523.6 248.7L525.3 246.8L527.0 248.7L528.7 246.8L530.4 248.7L532.1 246.8L533.8 248.7L535.5 246.8L537.2 248.7L538.9 246.8L540.6 248.7L542.3 246.8L544.0 248.7L545.7 246.8L547.4 248.7L549.1 246.8L550.8 248.7L552.5 246.8L554.2 248.7L555.9 246.8" stroke="#d6262c" stroke-width="0.75" stroke-linejoin="round"/>
<path d="M520.2 271.6L521.9 269.8L523.6 271.6L525.3 269.8L527.0 271.6L528.7 269.8L530.4 271.6L532.1 269.8L533.8 271.6L535.5 269.8L537.2 271.6L538.9 269.8" stroke="#d6262c" stroke-width="0.75" stroke-linejoin="round"/>
<path d="M166.7 320.8L168.4 318.9L170.1 320.8L171.8 318.9L173.5 320.8L175.2 318.9L176.9 320.8L178.6 318.9L180.3 320.8L182.0 318.9L183.7 320.8L185.4 318.9L187.1 320.8L188.8 318.9" stroke="#d6262c" stroke-width="0.75" stroke-linejoin="round"/>
<path d="M192.2 348.2L193.9 346.3L195.6 348.2L197.3 346.3L199.0 348.2L200.7 346.3L202.4 348.2L204.1 346.3L205.8 348.2L207.5 346.3L209.2 348.2L210.9 346.3L212.6 348.2L214.3 346.3L216.0 348.2" stroke="#d6262c" stroke-width="0.75" stroke-linejoin="round"/>
<path d="M166.7 398.6L168.4 396.8L170.1 398.6L171.8 396.8L173.5 398.6L175.2 396.8L176.9 398.6L178.6 396.8L180.3 398.6L182.0 396.8L183.7 398.6L185.4 396.8L187.1 398.6L188.8 396.8L190.5 398.6L192.2 396.8L193.9 398.6L195.6 396.8L197.3 398.6L199.0 396.8L200.7 398.6L202.4 396.8L204.1 398.6L205.8 396.8L207.5 398.6" stroke="#d6262c" stroke-width="0.75" stroke-linejoin="round"/>
</svg>
<div class="vl" style="left:159.5px;top:176.0px;height:231.5px"></div>
<div class="vl" style="left:713.1px;top:176.0px;height:231.5px"></div>
<div class="vl" style="left:238.9px;top:176.0px;height:231.5px"></div>
<div class="vl" style="left:304.2px;top:203.0px;height:204.5px"></div>
<div class="vl" style="left:369.5px;top:203.0px;height:204.5px"></div>
<div class="vl" style="left:436.5px;top:176.0px;height:231.5px"></div>
<div class="vl" style="left:504.5px;top:230.0px;height:177.5px"></div>
<div class="vl" style="left:578.1px;top:203.0px;height:204.5px"></div>
<div class="vl" style="left:651.2px;top:230.0px;height:177.5px"></div>
<div class="hz" style="top:175.5px;left:159.5px;width:554.6px"></div>
<div class="hz" style="top:407.0px;left:159.5px;width:554.6px"></div>
<div class="hz" style="top:202.5px;left:239.4px;width:474.2px"></div>
<div class="hz" style="top:229.5px;left:437.0px;width:276.6px"></div>
<div class="hz" style="top:279.0px;left:160.0px;width:553.6px"></div>
<div class="hz" style="top:329.5px;left:160.0px;width:553.6px"></div>
<div class="hz" style="top:356.5px;left:160.0px;width:553.6px"></div>
<div class="a" style="left:146px;top:162px;width:13.6px;height:13.6px;background:#fff;border:1px solid #a8a8a8;box-sizing:border-box"></div>
<svg style="left:146px;top:162px" width="13.6" height="13.6" viewBox="0 0 13.6 13.6"><path d="M6.8 2.6V11M2.6 6.8H11" stroke="#333" stroke-width="0.9" fill="none"/><path d="M6.8 1.6L5.3 3.6H8.3ZM6.8 12L5.3 10H8.3ZM1.6 6.8L3.6 5.3V8.3ZM12 6.8L10 5.3V8.3Z" fill="#333"/></svg>
<div class="a" style="left:714px;top:408px;width:13px;height:13px;background:#fff;border:1px solid #9a9a9a;box-sizing:border-box"></div>
<!-- mini toolbar -->
<div class="a" style="left:378px;top:115px;width:264px;height:56px;background:#fff;border:1px solid #d4d4d4;box-sizing:border-box;box-shadow:0 1px 4px rgba(0,0,0,.18)"></div>
<div class="a" style="left:381px;top:120px;width:128px;height:21px;border:1px solid #d0d0d0;box-sizing:border-box;background:#fff"></div>
<div class="a" style="left:467px;top:120px;width:1px;height:21px;background:#d0d0d0"></div>
<div class="a" style="left:534px;top:146px;width:32px;height:21px;background:#c6c6c6"></div>
<div class="a" style="left:567px;top:118px;width:1px;height:50px;background:#e4e4e4"></div>
<svg style="left:0;top:0" width="750" height="180" viewBox="0 0 750 180" fill="none">
<!-- dropdown arrows -->
<path d="M459.4 129.4H463.8L461.6 132Z" fill="#444"/><path d="M500.4 129.4H504.8L502.6 132Z" fill="#444"/>
<!-- A grow / shrink -->
<text x="512.4" y="137" font-family="Liberation Sans, sans-serif" font-size="14.5" fill="#444">A</text>
<path d="M522.4 126.6L524.2 124.2L526 126.6Z" fill="#2e7bc4"/>
<text x="531.6" y="137" font-family="Liberation Sans, sans-serif" font-size="12.5" fill="#444">A</text>
<path d="M540 124.4L541.8 126.8L543.6 124.4Z" fill="#2e7bc4"/>
<!-- format painter -->
<path d="M549.6 131.2L555.4 127.2L559 132.6L553.6 137Z" fill="#e4b868"/>
<path d="M550.6 132.4L554.4 136.2M552.4 130.8L556 134.8" stroke="#c99a45" stroke-width="0.6"/>
<path d="M556.6 128.8L562.6 124.2" stroke="#444" stroke-width="2.6" stroke-linecap="round"/>
<!-- B I -->
<text x="386.6" y="160.4" font-family="Liberation Sans, sans-serif" font-size="13" font-weight="bold" fill="#333">B</text>
<text x="406.6" y="160.4" font-family="Liberation Serif, serif" font-size="14" font-style="italic" fill="#333">I</text>
<!-- align -->
<path d="M422.6 149.8H434.6M424.6 152.8H432.6M422.6 155.8H434.6M424.6 158.8H432.6M422.6 161.8H434.6" stroke="#666" stroke-width="1"/>
<!-- highlight -->
<text x="440.4" y="155.6" font-family="Liberation Sans, sans-serif" font-size="7.5" fill="#444">aly</text>
<path d="M445 158.6L452.6 150.6L454.2 152.2L446.8 159.6Z" fill="#444"/>
<rect x="440" y="160.4" width="15" height="3.4" fill="#fff200"/>
<path d="M461.2 155L463.2 157L465.2 155" stroke="#444" stroke-width="1"/>
<!-- font color -->
<text x="473.2" y="159.4" font-family="Liberation Sans, sans-serif" font-size="14" fill="#444">A</text>
<rect x="472" y="160.4" width="14.6" height="3.4" fill="#ee1c1c"/>
<path d="M493.2 155L495.2 157L497.2 155" stroke="#444" stroke-width="1"/>
<!-- paint bucket -->
<path d="M508.2 153.6L513 149.4L518.4 155.4L512.6 160.2Z" fill="#fff" stroke="#555" stroke-width="1"/>
<path d="M510 151.6C508.6 149.6 510.4 148.2 511.8 150" stroke="#555" stroke-width="0.9"/>
<path d="M518.6 155.6C519.8 157.4 520.2 158.6 519.2 159.4C518.2 159.8 517.6 158.4 518.6 155.6Z" fill="#3b78c2"/>
<rect x="504.6" y="160.6" width="14.6" height="3" fill="#fff" stroke="#aaa" stroke-width="0.7"/>
<path d="M525.4 155L527.4 157L529.4 155" stroke="#444" stroke-width="1"/>
<!-- borders -->
<rect x="537.6" y="150" width="12.4" height="12.4" fill="#fff" stroke="#8a8a8a" stroke-width="0.9"/>
<path d="M543.8 150V162.4M537.6 156.2H550" stroke="#8a8a8a" stroke-width="0.9"/>
<path d="M556.6 155L558.6 157L560.6 155" stroke="#333" stroke-width="1"/>
<!-- insert -->
<rect x="574.6" y="121.6" width="19.8" height="18.6" fill="#fff" stroke="#8a8a8a" stroke-width="1"/>
<rect x="575.1" y="132.6" width="18.8" height="3.6" fill="#cfe0f3"/>
<path d="M579.6 121.6V140.2M584.6 121.6V140.2M589.6 121.6V140.2M574.6 125.4H594.4M574.6 129H594.4M574.6 132.6H594.4M574.6 136.2H594.4" stroke="#9a9a9a" stroke-width="0.7"/>
<path d="M584.5 134.4V140.6M581.8 138.6L584.5 141.6L587.2 138.6" stroke="#2e6fbe" stroke-width="1.3"/>
<path d="M597.6 130L599.6 132L601.6 130" stroke="#444" stroke-width="1"/>
<!-- delete -->
<rect x="611.8" y="122" width="18.8" height="18.2" fill="#fff" stroke="#8a8a8a" stroke-width="1"/>
<path d="M616.5 122V140.2M621.2 122V140.2M625.9 122V140.2M611.8 125.6H630.6M611.8 129.2H630.6M611.8 132.8H630.6M611.8 136.4H630.6" stroke="#9a9a9a" stroke-width="0.7"/>
<path d="M622.6 134.2L632.4 142.6M632.4 134.2L622.6 142.6" stroke="#d9432a" stroke-width="1.5"/>
<path d="M634.4 130L636.4 132L638.4 130" stroke="#444" stroke-width="1"/>
</svg>

<span class="t ns" style="left:383.0px;top:125.6px;font:normal 10.50px/1 'Liberation Sans', sans-serif;color:#444;transform:scaleX(0.9825)">Times New Ron</span>
<span class="t ns" style="left:470.0px;top:125.6px;font:normal 10.50px/1 'Liberation Sans', sans-serif;color:#444;transform:scaleX(0.9412)">13</span>
<span class="t ns" style="left:573.0px;top:149.8px;font:normal 9.50px/1 'Liberation Sans', sans-serif;color:#777;transform:scaleX(0.9678)">Insert</span>
<span class="t ns" style="left:608.0px;top:149.8px;font:normal 9.50px/1 'Liberation Sans', sans-serif;color:#777;transform:scaleX(0.9829)">Delete</span>
<!-- context menu -->
<div class="a" style="left:377px;top:185px;width:175px;height:330px;background:#fff;border:1px solid #c8c8c8;box-sizing:border-box;box-shadow:1px 1px 4px rgba(0,0,0,.2)"></div>
<div class="a" style="left:378.5px;top:208.3px;width:171.5px;height:21.3px;background:#c6c6c6"></div>
<div class="a" style="left:400.7px;top:231.3px;width:149.5px;height:19.2px;background:#ebebeb"></div>
<svg style="left:0;top:0" width="750" height="500" viewBox="0 0 750 500" fill="none"><rect x="380.65" y="208.35" width="66.3" height="20.7" rx="2" stroke="#e3101f" stroke-width="2.7"/></svg>
<div class="msep" style="top:277px"></div><div class="msep" style="top:366px"></div><div class="msep" style="top:478px"></div>
<div class="a" style="left:530px;top:373px;width:1px;height:14px;background:#efefef"></div>
<div class="arr" style="left:538px;top:286px"></div><div class="arr" style="left:538px;top:375px"></div><div class="arr" style="left:538px;top:397.5px"></div>
<svg style="left:0;top:0" width="750" height="500" viewBox="0 0 750 500" fill="none">
<!-- cut -->
<path d="M385.6 191.6L392.4 200.4M393.6 191.6L386.8 200.4" stroke="#444" stroke-width="1.2"/>
<circle cx="386" cy="202" r="2" stroke="#3b78c2" stroke-width="1.1"/><circle cx="393.2" cy="202" r="2" stroke="#3b78c2" stroke-width="1.1"/>
<!-- copy -->
<path d="M384.4 213.4H388.4L390.4 215.4V221.6H384.4Z" fill="#fff" stroke="#777" stroke-width="0.9"/>
<path d="M385.8 216.4H389M385.8 218.4H389" stroke="#6f9bd1" stroke-width="0.7"/>
<path d="M388.8 216.8H393.4L396 219.4V226.2H388.8Z" fill="#fff" stroke="#777" stroke-width="0.9"/>
<path d="M390.4 220.6H394.4M390.4 222.4H394.4M390.4 224.2H394.4" stroke="#6f9bd1" stroke-width="0.7"/>
<!-- paste -->
<rect x="385" y="235.6" width="9" height="10.6" rx="0.8" fill="#e6b35c"/>
<rect x="387.4" y="233.8" width="4.2" height="2.8" rx="0.8" fill="#f3f3f3" stroke="#666" stroke-width="0.9"/>
<path d="M390.6 239.8H395.4L397.8 242.2V247.4H390.6Z" fill="#fff" stroke="#777" stroke-width="0.9"/>
<!-- paste options x4 -->
<g id="clip1"><path d="M411 258H408V272.6H414" stroke="#e0aa4e" stroke-width="1.5"/><path d="M416 258H418.2V264" stroke="#e0aa4e" stroke-width="1.5"/><rect x="410.8" y="256" width="5.2" height="3" rx="1" fill="#fff" stroke="#777" stroke-width="0.9"/></g>
<g transform="translate(26 0)"><path d="M411 258H408V272.6H414" stroke="#e0aa4e" stroke-width="1.5"/><path d="M416 258H418.2V264" stroke="#e0aa4e" stroke-width="1.5"/><rect x="410.8" y="256" width="5.2" height="3" rx="1" fill="#fff" stroke="#777" stroke-width="0.9"/></g>
<g transform="translate(52 0)"><path d="M411 258H408V272.6H414" stroke="#e0aa4e" stroke-width="1.5"/><path d="M416 258H418.2V264" stroke="#e0aa4e" stroke-width="1.5"/><rect x="410.8" y="256" width="5.2" height="3" rx="1" fill="#fff" stroke="#777" stroke-width="0.9"/></g>
<g transform="translate(78 0)"><path d="M411 258H408V272.6H414" stroke="#e0aa4e" stroke-width="1.5"/><path d="M416 258H418.2V264" stroke="#e0aa4e" stroke-width="1.5"/><rect x="410.8" y="256" width="5.2" height="3" rx="1" fill="#fff" stroke="#777" stroke-width="0.9"/></g>
<!-- badge1: table -->
<rect x="415.6" y="265.6" width="9.4" height="8.4" fill="#fff" stroke="#666" stroke-width="0.9"/><path d="M415.6 268.4H425M415.6 271.2H425M418.8 265.6V274M422 265.6V274" stroke="#888" stroke-width="0.6"/>
<!-- badge2: nested -->
<rect x="441.6" y="264.4" width="9.6" height="4.6" fill="#e4e4e4" stroke="#777" stroke-width="0.7"/><path d="M444.8 264.4V269M448 264.4V269" stroke="#777" stroke-width="0.6"/>
<path d="M446.4 269V273.6M444.6 271.6L446.4 273.8L448.2 271.6" stroke="#4ea57f" stroke-width="1"/>
<rect x="442" y="272.6" width="2.6" height="1.8" fill="#888"/><rect x="448.4" y="272.6" width="2.6" height="1.8" fill="#888"/>
<!-- badge3: merge -->
<rect x="467.8" y="263.6" width="9.2" height="10.4" fill="#fff" stroke="#777" stroke-width="0.7"/><path d="M470.9 263.6V274M474 263.6V274M467.8 270.8H477" stroke="#888" stroke-width="0.6"/>
<rect x="466.4" y="266" width="11.6" height="3.4" fill="#3b78c2"/>
<!-- badge4: A -->
<text x="493.6" y="274.4" font-family="Liberation Sans, sans-serif" font-size="12" fill="#333">A</text>
<!-- delete table -->
<rect x="383.2" y="305" width="11.6" height="11" fill="#fff" stroke="#8a8a8a" stroke-width="0.9"/>
<path d="M386.1 305V316M389 305V316M391.9 305V316M383.2 307.8H394.8M383.2 310.6H394.8M383.2 313.4H394.8" stroke="#9a9a9a" stroke-width="0.6"/>
<path d="M390.6 312.2L397 318.2M397 312.2L390.6 318.2" stroke="#d9432a" stroke-width="1.3"/>
<!-- distribute rows -->
<rect x="383.2" y="328" width="10" height="11.4" fill="#fff" stroke="#777" stroke-width="0.9"/><path d="M383.2 333.7H393.2M388.2 328V339.4" stroke="#777" stroke-width="0.8"/>
<path d="M396 327.4V340" stroke="#3b78c2" stroke-width="1"/><path d="M394.6 328H397.4M394.6 333.7H397.4M394.6 339.4H397.4" stroke="#3b78c2" stroke-width="1"/>
<!-- distribute cols -->
<rect x="383.6" y="352" width="11.4" height="10" fill="#fff" stroke="#777" stroke-width="0.9"/><path d="M389.3 352V362M383.6 357H395" stroke="#777" stroke-width="0.8"/>
<path d="M383 349.4H395.6" stroke="#3b78c2" stroke-width="1"/><path d="M383.6 348V350.8M389.3 348V350.8M395 348V350.8" stroke="#3b78c2" stroke-width="1"/>
<!-- text direction -->
<path d="M384.4 416.6V427M387.4 416.6V427M390.4 416.6V427" stroke="#555" stroke-width="1"/>
<path d="M383 428.4H397" stroke="#555" stroke-width="1.2" stroke-dasharray="1.6 1"/>
<text x="391.6" y="422.6" font-family="Liberation Sans, sans-serif" font-size="8.5" font-weight="bold" fill="#3b78c2">A</text>
<!-- insert caption -->
<path d="M384.6 438.6H391.4L394.6 441.8V451H384.6Z" fill="#fff" stroke="#8a8a8a" stroke-width="0.9"/>
<rect x="386.6" y="443.4" width="4.6" height="4.6" fill="#fff" stroke="#c77" stroke-width="0.8"/>
<!-- table properties -->
<rect x="383.4" y="461" width="12.8" height="3" fill="#555"/>
<rect x="383.4" y="464" width="12.8" height="9" fill="#fff" stroke="#8a8a8a" stroke-width="0.8"/><path d="M387.6 464V473M383.4 467H396.2M383.4 470H396.2" stroke="#9a9a9a" stroke-width="0.6"/>
<rect x="389.6" y="466.6" width="7.6" height="7.2" fill="#fff" stroke="#666" stroke-width="0.8"/><path d="M391 469H395.8M391 471.4H395.8" stroke="#3b78c2" stroke-width="0.8"/>
<!-- new comment -->
<path d="M385.6 485.6H396.6V493H389.4L386.8 495.6V493H385.6Z" fill="#fff" stroke="#777" stroke-width="0.9"/>
<path d="M385 482.6V487M382.8 484.8H387.2" stroke="#4ea57f" stroke-width="1.3"/>
</svg>

<span class="t ns" style="left:407.6px;top:192.3px;font:normal 11.40px/1 'Liberation Sans', sans-serif;color:#4d4d4d;transform:scaleX(0.8345)">Cu<u>t</u></span>
<span class="t ns" style="left:407.3px;top:214.4px;font:normal 11.40px/1 'Liberation Sans', sans-serif;color:#4d4d4d;transform:scaleX(0.9207)"><u>C</u>opy</span>
<span class="t ns" style="left:408.4px;top:235.5px;font:bold 10.50px/1 'Liberation Sans', sans-serif;color:#4d4d4d;transform:scaleX(0.9661)">Paste Options:</span>
<span class="t ns" style="left:407.3px;top:285.2px;font:normal 11.40px/1 'Liberation Sans', sans-serif;color:#4d4d4d;transform:scaleX(0.8912)"><u>I</u>nsert</span>
<span class="t ns" style="left:407.3px;top:306.7px;font:normal 11.40px/1 'Liberation Sans', sans-serif;color:#4d4d4d;transform:scaleX(0.8980)">Delete <u>T</u>able</span>
<span class="t ns" style="left:407.3px;top:328.7px;font:normal 11.40px/1 'Liberation Sans', sans-serif;color:#4d4d4d;transform:scaleX(0.9066)">Distribute Rows Eve<u>n</u>ly</span>
<span class="t ns" style="left:407.3px;top:350.0px;font:normal 11.40px/1 'Liberation Sans', sans-serif;color:#4d4d4d;transform:scaleX(0.9147)">Distribute Columns Evenl<u>y</u></span>
<span class="t ns" style="left:407.3px;top:374.0px;font:normal 11.40px/1 'Liberation Sans', sans-serif;color:#4d4d4d;transform:scaleX(0.8875)"><u>B</u>order Styles</span>
<span class="t ns" style="left:407.3px;top:395.9px;font:normal 11.40px/1 'Liberation Sans', sans-serif;color:#4d4d4d;transform:scaleX(0.9471)"><u>A</u>utoFit</span>
<span class="t ns" style="left:407.3px;top:418.0px;font:normal 11.40px/1 'Liberation Sans', sans-serif;color:#4d4d4d;transform:scaleX(0.9005)">Te<u>x</u>t Direction...</span>
<span class="t ns" style="left:407.3px;top:439.9px;font:normal 11.40px/1 'Liberation Sans', sans-serif;color:#4d4d4d;transform:scaleX(0.9040)">Insert <u>C</u>aption...</span>
<span class="t ns" style="left:407.3px;top:462.0px;font:normal 11.40px/1 'Liberation Sans', sans-serif;color:#4d4d4d;transform:scaleX(0.8919)">Table P<u>r</u>operties...</span>
<span class="t ns" style="left:407.3px;top:485.2px;font:normal 11.40px/1 'Liberation Sans', sans-serif;color:#4d4d4d;transform:scaleX(0.9277)">New Co<u>m</u>ment</span>
</body></html>
